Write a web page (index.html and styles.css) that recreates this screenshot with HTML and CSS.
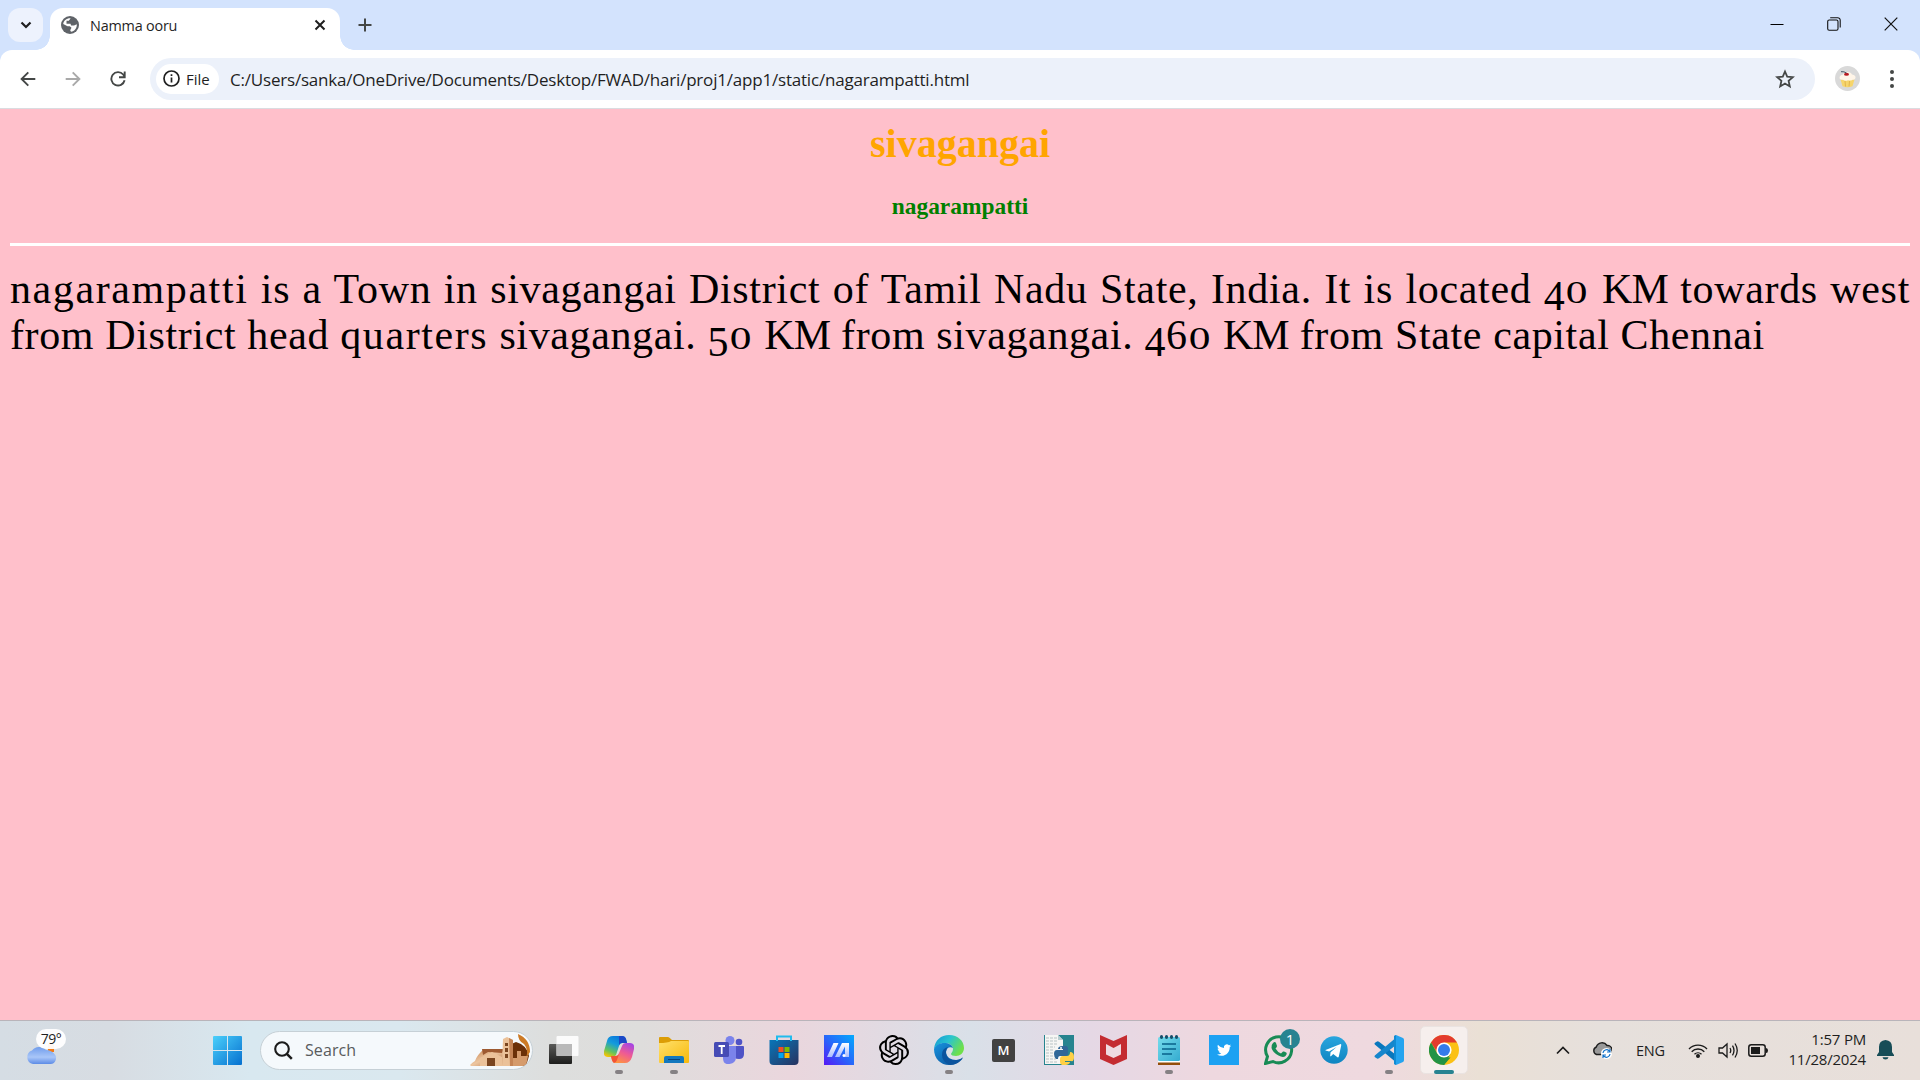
FILE: index.html
```html
<!DOCTYPE html>
<html lang="en">
<head>
<meta charset="utf-8">
<title>Namma ooru</title>
<link rel="stylesheet" href="styles.css">
</head>
<body>
<header class="tabstrip">
  <button class="tab-search" aria-label="Search tabs"><svg width="12" height="8" viewBox="0 0 12 8"><path d="M1.5 1.5 6 6l4.500-4.500" fill="none" stroke="#1f1f1f" stroke-width="2.200"/></svg></button>
  <div class="tab">
    <svg width="18" height="18" viewBox="0 0 18 18"><circle cx="9" cy="9" r="9" fill="#5f6368"/><path d="M9.800 2.200 8 4.800H5.500v3h4l.6 1.700H13l2.800-1.200c.3 4-2.300 7-5.800 7.500l-.8-1.600 1.300-2.500-1.700-1.500H6.500L2.200 8C2.600 4.500 5.400 2 9.800 2.200z" fill="#fff"/><path d="M9.500 2.500 13 4v2.500H9.500L8 5z" fill="#5f6368"/></svg>
    <span class="tab-title">Namma ooru</span>
    <svg width="12" height="12" viewBox="0 0 12 12"><path d="m1.500 1.500 9 9m0-9-9 9" stroke="#1f1f1f" stroke-width="2"/></svg>
  </div>
  <svg class="new-tab" width="14" height="14" viewBox="0 0 14 14"><path d="M7 .5v13M.5 7h13" stroke="#444746" stroke-width="2"/></svg>
  <div class="window-controls">
    <svg width="14" height="14" viewBox="0 0 14 14"><path d="M.5 7.500h13" stroke="#000" stroke-width="1"/></svg>
    <svg width="14" height="14" viewBox="0 0 14 14" fill="none" stroke="#111" stroke-width="1.100"><rect x=".7" y="3" width="10.300" height="10.300" rx="1.500"/><path d="M3.200.7h7.500a2.500 2.500 0 0 1 2.500 2.500v7.300"/></svg>
    <svg width="14" height="14" viewBox="0 0 14 14"><path d="m.7.7 12.600 12.600m0-12.600L.7 13.300" stroke="#111" stroke-width="1.200"/></svg>
  </div>
</header>
<nav class="toolbar">
  <svg class="nav-icon" width="16" height="16" viewBox="0 0 16 16" fill="none" stroke="#444746" stroke-width="1.900"><path d="M15.300 8H2M8.300 1.300 1.600 8l6.700 6.700"/></svg>
  <svg class="nav-icon" width="16" height="16" viewBox="0 0 16 16" fill="none" stroke="#a9a9a9" stroke-width="1.900"><path d="M.7 8H14M7.700 1.300 14.400 8l-6.700 6.700"/></svg>
  <svg class="nav-icon" width="16" height="16" viewBox="0 0 16 16" fill="none" stroke="#444746" stroke-width="1.900"><path d="M14.600 9.300A6.700 6.700 0 1 1 13.200 3.500L14.600 5.500M14.700.5v5.700H9"/></svg>
  <div class="omnibox">
    <div class="file-chip">
      <svg width="17" height="17" viewBox="0 0 17 17"><circle cx="8.500" cy="8.500" r="7.500" fill="none" stroke="#1f1f1f" stroke-width="1.700"/><path d="M8.500 7.500v5M8.500 4.300v1.800" stroke="#1f1f1f" stroke-width="1.700"/></svg>
      <span class="chip-text">File</span>
    </div>
    <span class="url">C:/Users/sanka/OneDrive/Documents/Desktop/FWAD/hari/proj1/app1/static/nagarampatti.html</span>
    <svg width="20" height="20" viewBox="0 0 20 20"><path d="m10 2.500 2.200 5.200 5.600.5-4.200 3.700 1.200 5.500-4.800-2.900-4.800 2.900 1.200-5.500-4.200-3.700 5.600-.5z" fill="none" stroke="#444746" stroke-width="1.800"/></svg>
  </div>
  <svg class="avatar" width="25" height="25" viewBox="0 0 25 25"><circle cx="12.500" cy="12.500" r="12.500" fill="#d9d9d9"/><path d="m5.500 13.500 2 6.700q5 2 10 0l2-6.700z" fill="#f6d56b"/><path d="m10 15 .5 5.500M14.500 15l-.5 5.500" stroke="#dcab45" stroke-width=".8"/><path d="M4.500 12q0-3 3.500-3.500Q9 6 12.500 6T17 8.500q4 .5 3.500 3.500-.5 2.200-3 1.700-2 1.500-4.500.5-3 1.500-5-.5-3.300.5-3.500-1.700z" fill="#fff5e8"/><ellipse cx="11.500" cy="8.200" rx="2.500" ry="1.500" fill="#b91820"/><path d="M11.500 7Q9 5.300 6 5.700" fill="none" stroke="#456" stroke-width="1"/></svg>
  <svg width="6" height="20" viewBox="0 0 6 20" fill="#444746"><circle cx="3" cy="3" r="2"/><circle cx="3" cy="10" r="2"/><circle cx="3" cy="17" r="2"/></svg>
</nav>
<main class="page">
  <h1 class="district">sivagangai</h1>
  <h3 class="town">nagarampatti</h3>
  <hr class="rule">
  <p class="about"><span class="line line-full"><span class="wide">nagarampatti</span> is a Town in sivagangai District of Tamil Nadu State, India. It is located <span class="low">4</span><span class="small">0</span> <span class="tight">KM</span> towards west</span>
  <span class="line line-last">from District head <span class="wide">quarters</span> sivagangai. <span class="low">5</span><span class="small">0</span> <span class="tight">KM</span> from sivagangai. <span class="low">4</span>6<span class="small">0</span> <span class="tight">KM</span> from State capital Chennai</span></p>
</main>
<footer class="taskbar">
  <div class="weather">
    <svg width="32" height="26" viewBox="0 0 32 26"><defs><linearGradient id="cloud" x2="0" y2="1"><stop stop-color="#6f9cec"/><stop offset=".6" stop-color="#a9c6f8"/><stop offset="1" stop-color="#5d8ce6"/></linearGradient></defs><path d="M22 5h6v8h-6z" fill="#f27a15"/><path d="M7 25a7 7 0 0 1-1-13.500A9 9 0 0 1 20 11q5 0 8 3.500a6 6 0 0 1-3.500 10.500z" fill="url(#cloud)"/></svg>
    <span class="temp">79°</span>
  </div>
  <div class="slot start"><svg width="29" height="29" viewBox="0 0 29 29"><defs><linearGradient id="win" x2="1" y2="1"><stop stop-color="#4bd0fb"/><stop offset="1" stop-color="#0670cf"/></linearGradient></defs><path d="M1 0h13v14H0V1q0-1 1-1zM15 0h13q1 0 1 1v13H15zM0 15h14v14H1q-1 0-1-1zM15 15h14v13q0 1-1 1H15z" fill="url(#win)"/></svg></div>
  <div class="search">
    <svg width="19" height="19" viewBox="0 0 19 19" fill="none" stroke="#1b1b1b" stroke-width="2.100"><circle cx="8" cy="8" r="6.800"/><path d="m12.800 12.800 5 5" stroke-width="2.500"/></svg>
    <span class="search-text">Search</span>
    <svg class="castle" width="60" height="33" viewBox="0 0 60 33"><defs><linearGradient id="sand" x2="1" y2="1"><stop stop-color="#bd7641"/><stop offset=".5" stop-color="#edc6a0"/><stop offset="1" stop-color="#b46e3e"/></linearGradient></defs><path d="M46 8q11 3 13 14l-3 10H34l-3-15 8-6z" fill="#6b3008"/><path d="M48 0q12 5 12 18l-4 6q3-8-2-14-6-3-6-10z" fill="#cc7a25"/><path d="M0 31q3-3 5-4 2-6 9-12h19v17H1z" fill="url(#sand)"/><path d="M12 15h22l-2 4-14-1-5 3z" fill="#9e5a31"/><path d="m10 24 12-6 10 5v9H10zM33 5l4-2 6 3v26H32z" fill="#ebc29a"/><path d="M39 4l4 2v26h-3z" fill="#c58455"/><path d="M35 9h3v3h-3zM35 14h3v4h-3zM35 20h3v4h-3zM17 24h8v8h-8z" fill="#7a451f"/><path d="M43 24h4v-7h4v5h7l-2 10H43z" fill="#d59b6c"/></svg>
  </div>
  <div class="apps">
    <div class="slot"><svg width="30" height="28" viewBox="0 0 30 28"><defs><linearGradient id="dark" x2="0" y2="1"><stop stop-color="#5a5a58"/><stop offset="1" stop-color="#1d1d1c"/></linearGradient></defs><rect y="8" width="23" height="20" rx="1" fill="url(#dark)"/><rect x="7.500" width="22" height="20" rx="1" fill="#fff" opacity=".88"/><path d="M7.500 8H23v12H7.500z" fill="#b9b9b9"/></svg></div>
    <div class="slot running"><svg width="30" height="28" viewBox="0 0 30 28"><defs><linearGradient id="co1" x1=".7" x2=".2" y2="1"><stop stop-color="#0874dc"/><stop offset=".4" stop-color="#149bdc"/><stop offset=".75" stop-color="#65c45c"/><stop offset="1" stop-color="#fac400"/></linearGradient><linearGradient id="co2" x1=".8" x2=".3" y2="1"><stop stop-color="#a444e5"/><stop offset=".5" stop-color="#ef5b93"/><stop offset="1" stop-color="#ff963e"/></linearGradient></defs><path d="M15 0h3q3 0 4 3l1 4h-5q-2 0-3 3l-3 9q-1 2-4 2H4q-5 0-4-6L3 5q1-5 6-5z" fill="url(#co1)"/><path d="M15 0h3q3 0 4 3l1 4h-5q-2 0-3 2z" fill="#1b48c6"/><path d="M15 27h-3q-3 0-4-3l-1-4h5q2 0 3-3l3-7q1-3 4-3h4q5 0 4 6l-2 8q-2 6-7 6z" fill="url(#co2)"/><path d="M7 20h5q2 0 3-2l-2 6q-1 3-3 3-2-1-3-7z" fill="#f25435"/></svg></div>
    <div class="slot running"><svg width="30" height="27" viewBox="0 0 30 27"><defs><linearGradient id="fold" x2="1" y2="1"><stop stop-color="#ffe06b"/><stop offset="1" stop-color="#f8b90a"/></linearGradient></defs><path d="M0 1q0-1 1-1h8q1 0 4 3h16q1 0 1 1v5H0z" fill="#dc9d06"/><path d="M0 6q9 0 12-2h17q1 0 1 1v20q0 1-1 1H1q-1 0-1-1z" fill="url(#fold)"/><path d="M5 26v-5q0-2 2-2h16q2 0 2 2v5z" fill="#1478be"/><path d="M9 22.500h12" stroke="#08447d"/></svg></div>
    <div class="slot"><svg width="30" height="28" viewBox="0 0 30 28"><circle cx="25" cy="6" r="3.300" fill="#4f53c6"/><path d="M19 10h10q1 0 1 1v7q0 5-5 5-6 0-6-6z" fill="#4f53c6"/><circle cx="16" cy="4.500" r="4.500" fill="#7b83eb"/><path d="M9 10h13v11q0 6-6.500 7T9 22z" fill="#7b83eb"/><rect y="6" width="15" height="15" rx="1.500" fill="#464bb5"/><path d="M4.500 10h6.500M7.700 10v8" stroke="#fff" stroke-width="1.800"/></svg></div>
    <div class="slot"><svg width="30" height="30" viewBox="0 0 30 30"><defs><linearGradient id="store" x2="1" y2="1"><stop stop-color="#0876b9"/><stop offset="1" stop-color="#28325f"/></linearGradient></defs><path d="M.5 5h29v21q0 4-4 4h-21q-4 0-4-4z" fill="url(#store)"/><path d="M8 6V1.500h14V6" fill="none" stroke="#21bbed" stroke-width="2"/><path d="M9.500 12h5v5h-5z" fill="#f25022"/><path d="M15.500 12h5v5h-5z" fill="#7fba00"/><path d="M9.500 18h5v5h-5z" fill="#00a4ef"/><path d="M15.500 18h5v5h-5z" fill="#ffb900"/></svg></div>
    <div class="slot"><svg width="30" height="30" viewBox="0 0 30 30"><defs><linearGradient id="asus" x1="0" y1="1" x2="1" y2="0"><stop stop-color="#5718f4"/><stop offset=".45" stop-color="#2a62fa"/><stop offset="1" stop-color="#03aafd"/></linearGradient><linearGradient id="slash" x2="0" y2="1"><stop stop-color="#fff"/><stop offset="1" stop-color="#a9bcff"/></linearGradient></defs><path d="M0 0h30v30H0z" fill="url(#asus)"/><path d="M3 22 9.500 8h5L8 22zM11 22l7-14h7v14h-4V11.500L15.500 22z" fill="url(#slash)"/><circle cx="20" cy="20.500" r="1.500" fill="#fff"/></svg></div>
    <div class="slot"><svg width="30" height="30" viewBox="0 0 24 24"><path d="M22.282 9.821a5.985 5.985 0 0 0-.516-4.910 6.046 6.046 0 0 0-6.510-2.900A6.065 6.065 0 0 0 4.981 4.182a5.985 5.985 0 0 0-3.998 2.900 6.046 6.046 0 0 0 .743 7.097 5.980 5.980 0 0 0 .51 4.911 6.051 6.051 0 0 0 6.515 2.900A5.985 5.985 0 0 0 13.260 24a6.056 6.056 0 0 0 5.772-4.206 5.990 5.990 0 0 0 3.998-2.900 6.056 6.056 0 0 0-.747-7.073zM13.260 22.430a4.476 4.476 0 0 1-2.876-1.040l.141-.081 4.779-2.758a.795.795 0 0 0 .392-.681v-6.737l2.020 1.169a.071.071 0 0 1 .038.052v5.583a4.504 4.504 0 0 1-4.494 4.493zM3.600 18.304a4.471 4.471 0 0 1-.535-3.014l.142.085 4.783 2.758a.771.771 0 0 0 .781 0l5.843-3.368v2.332a.080.080 0 0 1-.033.062L9.740 19.950a4.499 4.499 0 0 1-6.140-1.646zM2.340 7.896a4.485 4.485 0 0 1 2.366-1.973V11.600a.766.766 0 0 0 .388.677l5.815 3.354-2.020 1.169a.076.076 0 0 1-.071 0l-4.830-2.787A4.504 4.504 0 0 1 2.340 7.872zm16.597 3.855-5.833-3.387L15.119 7.200a.076.076 0 0 1 .071 0l4.830 2.791a4.494 4.494 0 0 1-.676 8.105v-5.678a.790.790 0 0 0-.407-.667zm2.010-3.023-.141-.085-4.774-2.782a.776.776 0 0 0-.785 0L9.409 9.230V6.897a.066.066 0 0 1 .028-.061l4.830-2.787a4.499 4.499 0 0 1 6.680 4.660zm-12.640 4.135-2.020-1.164a.080.080 0 0 1-.038-.057V6.075a4.499 4.499 0 0 1 7.376-3.453l-.142.080-4.778 2.758a.795.795 0 0 0-.393.681zm1.097-2.365 2.602-1.500 2.607 1.500v2.999l-2.597 1.500-2.607-1.500z"/></svg></div>
    <div class="slot running"><svg width="30" height="30" viewBox="0 0 30 30"><defs><linearGradient id="edge" x2="1" y2=".5"><stop stop-color="#1395d5"/><stop offset=".5" stop-color="#2ac4cf"/><stop offset="1" stop-color="#6fe04a"/></linearGradient><linearGradient id="edgeb" x2="1" y2="1"><stop stop-color="#1794df"/><stop offset="1" stop-color="#0b4a93"/></linearGradient></defs><path d="M0 14C1 5 7 0 15 0c9 0 15 6 15 13 0 5-4 8-8 8-3 0-5-1-5-2s2-2 2-5-3-6-8-6C6 8 2 11 0 14z" fill="url(#edge)"/><path d="M0 14C2 10 6 8 10 8c5 0 8 2 9 5-3-2-7 0-7 4 0 5 5 8 10 8 3 0 5-1 7-3-3 5-8 8-14 8C7 30 0 24 0 14z" fill="url(#edgeb)"/><path d="M14 12q-6 1-6 8t8 10c6 0 10-3 13-7-10 5-17 1-17-6q0-3 2-5z" fill="#0b549e"/></svg></div>
    <div class="slot"><span class="m-tile">M</span></div>
    <div class="slot"><svg width="30" height="30" viewBox="0 0 30 30"><path d="M0 0h30v30H0z" fill="#26848f"/><path d="M1 0h13l5 5v24H1z" fill="#f6f6f4"/><path d="M2 3h11M2 6h12M2 9h12M2 12h9M2 15h8M2 18h8M2 21h8M2 24h10M2 27h12" stroke="#b8c3c5" stroke-dasharray="3 1"/><path d="M14 0v5h5z" fill="#b7cdd1"/><path d="M19 11q5-1 5 3v4q0 3-3 3h-5q-2 0-2 3h-2q-2-2-2-5 0-4 3-4h6v-1h-5q0-3 5-3z" fill="#2f6798"/><path d="M22 30q-6 1-6-3v-3q0-3 3-3h4q3 0 3-4 4 0 4 5t-3 4h-6v1h5q0 2-4 3z" fill="#ffd045"/><circle cx="17" cy="13" r="1" fill="#fff"/></svg></div>
    <div class="slot"><svg width="27" height="30" viewBox="0 0 27 30"><path d="m0 0 13.500 6L27 0v24l-13.500 6L0 24z" fill="#c42c31"/><path d="m6 9 7.500 4L21 9v10.500L13.500 23 6 19.500z" fill="#efdae0"/></svg></div>
    <div class="slot running"><svg width="22" height="30" viewBox="0 0 22 30"><defs><linearGradient id="note" x2="1" y2="1"><stop stop-color="#75dcec"/><stop offset="1" stop-color="#34abd0"/></linearGradient></defs><path d="M0 25h22v5H0z" fill="#934d0b"/><path d="M0 25h22v2.500H0z" fill="#fff"/><rect y="2" width="22" height="24" rx="1.500" fill="url(#note)"/><path d="M4 9h14M4 14h14M4 19h10" stroke="#08618a" stroke-width="1.600"/><g fill="#164e69"><ellipse cx="3.500" cy="2" rx="1.600" ry="2"/><ellipse cx="8.500" cy="2" rx="1.600" ry="2"/><ellipse cx="13.500" cy="2" rx="1.600" ry="2"/><ellipse cx="18.500" cy="2" rx="1.600" ry="2"/></g></svg></div>
    <div class="slot"><svg width="30" height="30" viewBox="0 0 30 30"><path d="M0 0h30v30H0z" fill="#1da1f2"/><path transform="translate(8 8) scale(.59)" fill="#fff" d="M23.953 4.570a10 10 0 0 1-2.825.775 4.958 4.958 0 0 0 2.163-2.723c-.951.555-2.005.959-3.127 1.184a4.920 4.920 0 0 0-8.384 4.482C7.690 8.095 4.067 6.130 1.640 3.162a4.822 4.822 0 0 0-.666 2.475c0 1.710.870 3.213 2.188 4.096a4.904 4.904 0 0 1-2.228-.616v.060a4.923 4.923 0 0 0 3.946 4.827 4.996 4.996 0 0 1-2.212.085 4.936 4.936 0 0 0 4.604 3.417A9.867 9.867 0 0 1 0 19.540a13.995 13.995 0 0 0 7.548 2.212c9.142 0 14.307-7.721 13.995-14.646a9.935 9.935 0 0 0 2.410-2.536z"/></svg></div>
    <div class="slot whatsapp"><svg width="30" height="30" viewBox="0 0 30 30"><path d="m1.500 28.500 2-7A13 13 0 1 1 9 26.500z" fill="none" stroke="#188b55" stroke-width="3"/><path d="M9 8q2-2 3 0l1 3q0 1-1.500 2.500 2 3.500 5.500 5l2-2q1-.5 3.500 1.200 1 1-1 3.300-2.500 2-7-.5Q9 18 7.500 13 7 10 9 8z" fill="#188b55"/></svg><span class="badge">1</span></div>
    <div class="slot"><svg width="28" height="28" viewBox="0 0 28 28"><defs><linearGradient id="tele" x2="0" y2="1"><stop stop-color="#29a5de"/><stop offset="1" stop-color="#0f85c1"/></linearGradient></defs><circle cx="14" cy="14" r="13.700" fill="url(#tele)"/><path d="M5.500 14 20 8.200q1.500-.4 1.200 1.200l-2.400 11q-.4 1.500-1.700.7l-3.900-3-2 2q-1 .8-1-.5l.4-3.300 6-5.400-7.500 4.700-3.600-1.200q-1.100-.4 0-.4z" fill="#fff"/></svg></div>
    <div class="slot running"><svg width="30" height="30" viewBox="0 0 30 30"><path d="M1 7.800 3 6.500q1-.5 2 .3L24 21.500V29L.8 9.500q-.8-1 .2-1.700z" fill="#0877bd"/><path d="M1 22.200 3 23.500q1 .5 2-.3L24 8.500V1L.8 20.500q-.8 1 .2 1.700z" fill="#1686cc"/><path d="m22 0 7 3q1 .5 1 2v20q0 1.500-1 2l-7 3z" fill="#25a4ef"/><path d="M22 0v30q-1 0-2-1V1q1-1 2-1z" fill="#118bd3"/></svg></div>
    <div class="slot active"><svg width="30" height="30" viewBox="0 0 30 30"><circle cx="15" cy="15" r="15" fill="#fbc116"/><path d="M2 7.500A15 15 0 0 1 28 7.500H15L9 18.500z" fill="#e33b2e"/><path d="M2 7.500 8.500 18.700 15 22.500h6.500L15 30A15 15 0 0 1 2 7.500z" fill="#229345"/><path d="m21.500 18.700-6.500 11.300-2-7z" fill="#229345"/><circle cx="15" cy="15" r="7.600" fill="#fff"/><circle cx="15" cy="15" r="6" fill="#347bea"/></svg></div>
  </div>
  <div class="tray">
    <svg class="chevron" width="14" height="9" viewBox="0 0 14 9"><path d="m1 7.500 6-6 6 6" fill="none" stroke="#1b1b1b" stroke-width="1.700"/></svg>
    <svg class="cloud" width="20" height="18" viewBox="0 0 20 18"><path d="M4.500 13.500a4 4 0 0 1-.2-7.500A6 6 0 0 1 15 4.500a4.500 4.500 0 0 1 1 9z" fill="#999" stroke="#1d1d1d" stroke-width="1.400"/><circle cx="14.500" cy="12.500" r="5.500" fill="#fff"/><path d="M11 12a3.600 3.600 0 0 1 6-2.300l1 1M18 13a3.600 3.600 0 0 1-6 2.300l-1-1M18 8v3h-3M11 17v-3h3" fill="none" stroke="#1372c9" stroke-width="1.200"/></svg>
    <span class="lang">ENG</span>
    <svg class="wifi" width="20" height="15" viewBox="0 0 20 15" fill="none" stroke="#1b1b1b" stroke-width="1.400"><path d="M1 6a12.500 12.500 0 0 1 18 0M3.700 8.700a8.800 8.800 0 0 1 12.600 0M6.500 11.300a5 5 0 0 1 7 0"/><circle cx="10" cy="13" r="1.300" fill="#1b1b1b"/></svg>
    <svg class="volume" width="21" height="17" viewBox="0 0 21 17" fill="none" stroke="#1b1b1b" stroke-width="1.300"><path d="M1 6h3.500L9 2v13l-4.500-4H1zM12 6q1.500 2.500 0 5M14.500 3.700q3 4.800 0 9.600M17 1.500q4.500 7 0 14"/></svg>
    <svg class="battery" width="21" height="13" viewBox="0 0 21 13"><rect x=".8" y=".8" width="16.400" height="11.400" rx="2.500" fill="none" stroke="#1b1b1b" stroke-width="1.500"/><path d="M3 3h9v7H3z" fill="#1b1b1b"/><path d="M18 4q2 0 2 2.500T18 9z" fill="#1b1b1b"/></svg>
    <div class="clock"><span class="time">1:57 PM</span><span class="date">11/28/2024</span></div>
    <svg width="17" height="20" viewBox="0 0 17 20" fill="#174d57"><path d="M8.500 0Q15 .5 15 7v5l2 3v1H0v-1l2-3V7Q2 .5 8.500 0zM5.500 17.200h6Q11 19.500 8.500 19.500t-3-2.300z"/></svg>
  </div>
</footer>
</body>
</html>
```
FILE: styles.css
```css
* { box-sizing: border-box; }
html, body { height: 100%; }
body {
  margin: 0;
  width: 1920px;
  height: 1080px;
  overflow: hidden;
  display: flex;
  flex-direction: column;
  background: #d3e3fd;
  font-family: "Open Sans", "Noto Sans", sans-serif;
  color: #1f1f1f;
}
svg { display: block; flex: none; }

.tabstrip { height: 50px; flex: none; display: flex; align-items: flex-start; padding: 8px 22px 0 8px; }
.tab-search {
  width: 35px; height: 34px; padding: 0; border: 0; border-radius: 12px;
  background: #edf2fd; display: flex; align-items: center; justify-content: center;
}
.tab {
  position: relative; width: 290px; height: 42px; margin-left: 7px; padding: 0 14px 8px 11px;
  display: flex; align-items: center; background: #fff; border-radius: 13px 13px 0 0;
}
.tab::before, .tab::after { content: ""; position: absolute; bottom: 0; width: 14px; height: 14px; }
.tab::before { left: -14px; background: radial-gradient(circle at 0 0, transparent 13.5px, #fff 14px); }
.tab::after { right: -14px; background: radial-gradient(circle at 100% 0, transparent 13.5px, #fff 14px); }
.tab-title { flex: 1; margin-left: 11px; font-size: 14.4px; letter-spacing: -.2px; white-space: nowrap; }
.new-tab { margin: 10px 0 0 18px; }
.window-controls { margin: 9px 0 0 auto; display: flex; gap: 43px; }

.toolbar {
  height: 59px; flex: none; display: flex; align-items: center; padding: 0 25px 1px 20px;
  background: #fff; border-bottom: 1px solid #dadce0; border-radius: 12px 12px 0 0;
}
.nav-icon { margin-right: 29px; }
.nav-icon:nth-child(3) { margin-right: 24px; }
.omnibox {
  width: 1665px; height: 42px; margin-right: 20px; padding: 0 20px 0 6px; border-radius: 21px;
  display: flex; align-items: center; background: #ecf1fa;
}
.file-chip { width: 63px; height: 30px; padding-left: 7px; border-radius: 15px; display: flex; align-items: center; gap: 6px; background: #fff; }
.chip-text { font-size: 15px; font-weight: 500; }
.url { flex: 1; margin-left: 11px; padding-top: 1px; font-size: 17px; letter-spacing: -.2px; white-space: nowrap; }
.avatar { margin-right: 29px; }

.page { flex: 1; min-height: 0; padding: 0 10px; background: #ffc0cb; font-family: "Liberation Serif", serif; }
.district { margin: 12px 0 0; font-size: 40px; line-height: 46px; text-align: center; color: orange; }
.town { margin: 26px 0 0; font-size: 23.4px; line-height: 27px; text-align: center; color: green; }
.rule { height: 3px; margin: 23px 0 20px; border: 0; background: #fff; }
.about { margin: 0; font-size: 42px; line-height: 46px; color: #000; }
.line { display: block; white-space: nowrap; height: 46px; }
.line-full { letter-spacing: .68px; white-space: normal; text-align: justify; text-align-last: justify; }
.line-last { letter-spacing: .62px; }
.wide { letter-spacing: 1.6px; }
.tight { letter-spacing: -1px; }
/* old-style figures: 4 and 5 descend, 0 sits at x-height */
.low, .small { display: inline-block; line-height: 1; }
.low { position: relative; top: 7px; }
.small { font-size: 31px; transform: scaleX(1.4); margin: 0 4px; }

.taskbar {
  height: 60px; flex: none; display: flex; align-items: center; padding-bottom: 1px; border-top: 1px solid #b9b4ba;
  background: linear-gradient(90deg, #d5dde4 0, #d7dce2 110px, #d8e8f0 250px, #dae8ef 400px, #dddedd 550px, #dedddc 640px, #ead6dd 790px, #e4d9e1 860px, #d9e0e8 970px, #e5d8e5 1090px, #eed8df 1210px, #efd9df 1370px, #eae0d5 1480px, #e6e0dc 1600px, #e8dfda 1920px);
}
.weather { position: relative; width: 200px; height: 58px; padding: 18px 0 0 26px; }
.temp {
  position: absolute; left: 36px; top: 8px; width: 30px; height: 20px; border-radius: 10px;
  background: #fffffff0; font-size: 14px; line-height: 20px; text-align: center; letter-spacing: -.5px;
}
.slot { position: relative; width: 55px; height: 58px; flex: none; display: flex; align-items: center; justify-content: center; }
.search {
  width: 273px; height: 39px; margin-left: 5px; padding-left: 13px; border-radius: 20px; border: 1px solid #c6d0d6;
  display: flex; align-items: center; background: #f5f9fc; overflow: hidden;
}
.search-text { flex: 1; margin-left: 12px; font-size: 16px; color: #595b5d; letter-spacing: .1px; }
.castle { margin: 1px 2px 0 0; }
.apps { display: flex; margin-left: 3px; }
.running::after, .active::after { content: ""; position: absolute; bottom: 5px; left: 23.5px; width: 8px; height: 4px; border-radius: 2px; background: #858184; }
.active::before { content: ""; position: absolute; inset: 5px 3.500px; border-radius: 5px; background: #f6efed; border: 1px solid #eae3e1; }
.active svg { position: relative; }
.active::after { left: 17.5px; width: 20px; background: #278391; }
.m-tile { width: 23px; height: 23px; border-radius: 2px; background: #424242; color: #fff; font-size: 13px; font-weight: 600; line-height: 23px; text-align: center; }
.badge { position: absolute; left: 29px; top: 8px; width: 20px; height: 20px; border-radius: 50%; background: #278391; color: #fff; font-size: 15px; line-height: 20px; text-align: center; }

.tray { flex: 1; display: flex; align-items: center; padding: 0 26px 0 0; }
.chevron { margin-left: 85px; }
.cloud { margin-left: 22px; }
.lang { width: 30px; margin-left: 24px; font-size: 14.5px; letter-spacing: -.2px; white-space: nowrap; }
.wifi { margin-left: 22px; }
.volume { margin-left: 10px; }
.battery { margin-left: 9px; }
.clock { flex: 1; margin-right: 11px; padding-bottom: 2px; display: flex; flex-direction: column; text-align: right; font-size: 15px; line-height: 20px; letter-spacing: -.2px; }
```
